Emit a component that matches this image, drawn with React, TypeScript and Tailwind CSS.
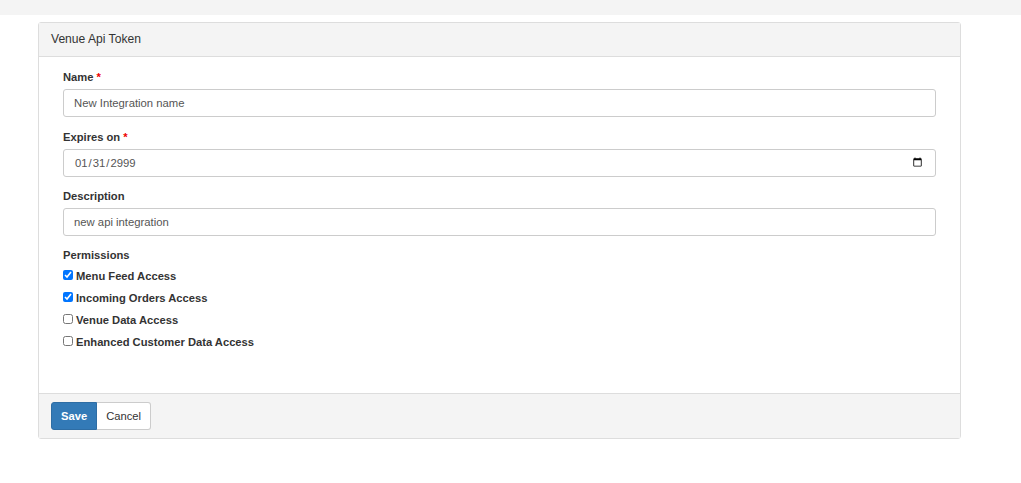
const perms = [
  { label: "Menu Feed Access", checked: true },
  { label: "Incoming Orders Access", checked: true },
  { label: "Venue Data Access", checked: false },
  { label: "Enhanced Customer Data Access", checked: false },
];

const inputCls =
  "w-full h-[28px] px-[10px] border border-[#ccc] rounded-[3px] text-[11.3px] text-[#555] outline-none";

const App = () => {
  return (
    <div className="min-h-screen bg-white text-[11.2px] text-[#333]" style={{ fontFamily: '"Liberation Sans", Arial, sans-serif' }}>
      {/* top strip */}
      <div className="h-[15px] bg-[#f4f4f4]"></div>

      <div className="pl-[38px] pr-[60px] pt-[7px]">
        <div className="border border-[#ddd] rounded-[3px] bg-white">
          {/* header */}
          <div className="h-[34px] flex items-center px-[12px] bg-[#f4f4f4] border-b border-[#ddd] text-[12.1px] text-[#333]">
            Venue Api Token
          </div>

          {/* body */}
          <div className="px-[24px] pt-[12px] pb-[40px]">
            <div className="mb-[12px]">
              <label className="block font-bold mb-[4px] leading-[16px]">
                Name <span className="text-[#e00]">*</span>
              </label>
              <input type="text" defaultValue="New Integration name" className={inputCls} />
            </div>

            <div className="mb-[11px]">
              <label className="block font-bold mb-[4px] leading-[16px]">
                Expires on <span className="text-[#e00]">*</span>
              </label>
              <input type="date" defaultValue="2999-01-31" className={inputCls} />
            </div>

            <div className="mb-[11px]">
              <label className="block font-bold mb-[4px] leading-[16px]">Description</label>
              <input type="text" defaultValue="new api integration" className={inputCls} />
            </div>

            <div>
              <div className="font-bold leading-[16px] mb-[2px]">Permissions</div>
              <div className="flex flex-col">
                {perms.map((p) => (
                  <label key={p.label} className="flex items-center h-[22px] font-bold">
                    <input
                      type="checkbox"
                      defaultChecked={p.checked}
                      className="w-[10px] h-[10px] m-0 mr-[3px] -mt-[3px]"
                    />
                    {p.label}
                  </label>
                ))}
              </div>
            </div>
          </div>

          {/* footer */}
          <div className="h-[45px] flex items-center px-[12px] bg-[#f4f4f4] border-t border-[#ddd]">
            <button className="h-[28px] px-[9px] bg-[#337ab7] border border-[#2e6da4] text-white font-bold rounded-l-[3px]">
              Save
            </button>
            <button className="h-[28px] px-[9px] bg-white border border-l-0 border-[#ccc] text-[#333] rounded-r-[3px]">
              Cancel
            </button>
          </div>
        </div>
      </div>
    </div>
  );
};

export default App;
